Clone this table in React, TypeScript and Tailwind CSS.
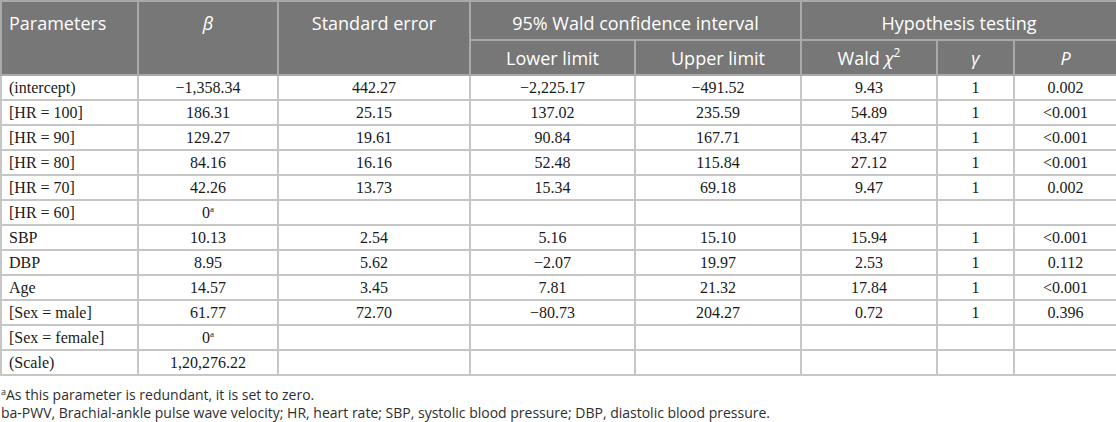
import React from 'react';

type Row = { name: string; cells: string[] };

const rows: Row[] = [
  { name: '(intercept)', cells: ['−1,358.34', '442.27', '−2,225.17', '−491.52', '9.43', '1', '0.002'] },
  { name: '[HR = 100]', cells: ['186.31', '25.15', '137.02', '235.59', '54.89', '1', '<0.001'] },
  { name: '[HR = 90]', cells: ['129.27', '19.61', '90.84', '167.71', '43.47', '1', '<0.001'] },
  { name: '[HR = 80]', cells: ['84.16', '16.16', '52.48', '115.84', '27.12', '1', '<0.001'] },
  { name: '[HR = 70]', cells: ['42.26', '13.73', '15.34', '69.18', '9.47', '1', '0.002'] },
  { name: '[HR = 60]', cells: ['0a', '', '', '', '', '', ''] },
  { name: 'SBP', cells: ['10.13', '2.54', '5.16', '15.10', '15.94', '1', '<0.001'] },
  { name: 'DBP', cells: ['8.95', '5.62', '−2.07', '19.97', '2.53', '1', '0.112'] },
  { name: 'Age', cells: ['14.57', '3.45', '7.81', '21.32', '17.84', '1', '<0.001'] },
  { name: '[Sex = male]', cells: ['61.77', '72.70', '−80.73', '204.27', '0.72', '1', '0.396'] },
  { name: '[Sex = female]', cells: ['0a', '', '', '', '', '', ''] },
  { name: '(Scale)', cells: ['1,20,276.22', '', '', '', '', '', ''] },
];

const widths = [137, 140, 192, 165, 166, 136, 77, 103];

// values ending in "a" carry the footnote mark
const Value = ({ v }: { v: string }) => {
  if (!v) return null;
  if (v.endsWith('a')) {
    return (
      <>
        {v.slice(0, -1)}
        <sup className="text-[9px] relative -top-[6px]">a</sup>
      </>
    );
  }
  return <>{v}</>;
};

export default function App() {
  const head = 'border-2 border-[#a9a9a9] bg-[#777777] text-white font-normal leading-[24px]';
  const top = `${head} align-top pt-[9px]`;
  const cell = 'border-2 border-[#c6c6c6] h-[25px] p-0 text-center';

  return (
    <div className="w-[1116px] h-[422px] overflow-hidden bg-white">
      <table
        className="w-[1116px] table-fixed border-collapse text-[#1a1a1a]"
        style={{ fontFamily: '"Liberation Serif", serif' }}
      >
        <colgroup>
          {widths.map((w, i) => (
            <col key={i} style={{ width: w }} />
          ))}
        </colgroup>
        <thead style={{ fontFamily: '"Open Sans", sans-serif' }} className="text-[18px]">
          <tr className="h-[39px]">
            <th rowSpan={2} className={`${top} text-left pl-[7px]`}>
              Parameters
            </th>
            <th rowSpan={2} className={`${top} italic`}>
              β
            </th>
            <th rowSpan={2} className={top}>
              Standard error
            </th>
            <th colSpan={2} className={top}>
              95% Wald confidence interval
            </th>
            <th colSpan={3} className={top}>
              Hypothesis testing
            </th>
          </tr>
          <tr className="h-[35px]">
            <th className={head}>Lower limit</th>
            <th className={head}>Upper limit</th>
            <th className={head}>
              Wald <span className="italic">χ</span>
              <sup className="text-[12px] relative -top-[8px]">2</sup>
            </th>
            <th className={`${head} italic`}>γ</th>
            <th className={`${head} italic`}>P</th>
          </tr>
        </thead>
        <tbody className="text-[16px] leading-[20px]">
          {rows.map((r) => (
            <tr key={r.name}>
              <td className={`${cell} text-left pl-[7px]`}>{r.name}</td>
              {r.cells.map((c, i) => (
                <td key={i} className={cell}>
                  <Value v={c} />
                </td>
              ))}
            </tr>
          ))}
        </tbody>
      </table>
      <div
        className="pt-[10px] pl-[1px] text-[14px] leading-[18px] text-[#2e2e2e]"
        style={{ fontFamily: '"Open Sans", sans-serif' }}
      >
        <p>
          <sup className="text-[9px] relative -top-[5px]">a</sup>As this parameter is redundant, it is set to zero.
        </p>
        <p>
          ba-PWV, Brachial-ankle pulse wave velocity; HR, heart rate; SBP, systolic blood pressure; DBP, diastolic
          blood pressure.
        </p>
      </div>
    </div>
  );
}
